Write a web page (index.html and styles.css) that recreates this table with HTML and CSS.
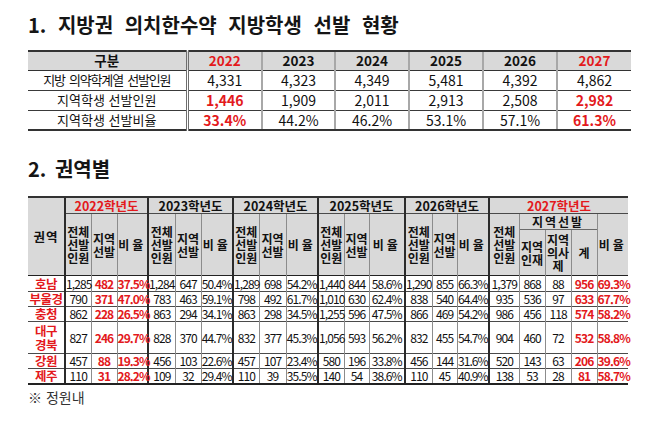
FILE: index.html
```html
<!DOCTYPE html>
<html lang="ko">
<head>
<meta charset="utf-8">
<title>지방권 의치한수약 지방학생 선발 현황</title>
<link rel="stylesheet" href="styles.css">
</head>
<body>
<div class="page">
  <h1 class="title">1. 지방권 의치한수약 지방학생 선발 현황</h1>
  <table class="summary">
    <colgroup>
      <col class="s-label"><col class="s-75"><col class="s-73"><col class="s-74"><col class="s-74"><col class="s-74"><col class="s-74">
    </colgroup>
    <thead>
      <tr><th class="label">구분</th><th class="red">2022</th><th>2023</th><th>2024</th><th>2025</th><th>2026</th><th class="red">2027</th></tr>
    </thead>
    <tbody>
      <tr><td class="label tight">지방 의약학계열 선발인원</td><td>4,331</td><td>4,323</td><td>4,349</td><td>5,481</td><td>4,392</td><td>4,862</td></tr>
      <tr><td class="label">지역학생 선발인원</td><td class="red b">1,446</td><td>1,909</td><td>2,011</td><td>2,913</td><td>2,508</td><td class="red b">2,982</td></tr>
      <tr><td class="label">지역학생 선발비율</td><td class="red b">33.4%</td><td>44.2%</td><td>46.2%</td><td>53.1%</td><td>57.1%</td><td class="red b">61.3%</td></tr>
    </tbody>
  </table>

  <h2 class="title title2">2. 권역별</h2>
  <table class="region">
    <colgroup>
      <col class="w37">
      <col class="w26"><col class="w26"><col class="w31">
      <col class="w27"><col class="w26"><col class="w32">
      <col class="w26"><col class="w27"><col class="w32">
      <col class="w26"><col class="w25"><col class="w36">
      <col class="w27"><col class="w25"><col class="w32">
      <col class="w30"><col class="w26"><col class="w26"><col class="w26"><col class="w31">
    </colgroup>
    <thead>
      <tr class="ha">
        <th rowspan="3" class="first">권역</th>
        <th colspan="3" class="gs red">2022학년도</th>
        <th colspan="3" class="gs">2023학년도</th>
        <th colspan="3" class="gs">2024학년도</th>
        <th colspan="3" class="gs">2025학년도</th>
        <th colspan="3" class="gs">2026학년도</th>
        <th colspan="5" class="gs red">2027학년도</th>
      </tr>
      <tr class="hb">
        <th rowspan="2" class="gs">전체<br>선발<br>인원</th><th rowspan="2">지역<br>선발</th><th rowspan="2" class="sp">비율</th>
        <th rowspan="2" class="gs">전체<br>선발<br>인원</th><th rowspan="2">지역<br>선발</th><th rowspan="2" class="sp">비율</th>
        <th rowspan="2" class="gs">전체<br>선발<br>인원</th><th rowspan="2">지역<br>선발</th><th rowspan="2" class="sp">비율</th>
        <th rowspan="2" class="gs">전체<br>선발<br>인원</th><th rowspan="2">지역<br>선발</th><th rowspan="2" class="sp">비율</th>
        <th rowspan="2" class="gs">전체<br>선발<br>인원</th><th rowspan="2">지역<br>선발</th><th rowspan="2" class="sp">비율</th>
        <th rowspan="2" class="gs">전체<br>선발<br>인원</th><th colspan="3" class="sp sub">지역선발</th><th rowspan="2" class="sp">비율</th>
      </tr>
      <tr class="hc">
        <th>지역<br>인재</th><th>지역<br>의사<br>제</th><th>계</th>
      </tr>
    </thead>
    <tbody>
      <tr>
        <th class="first">호남</th>
        <td class="gs">1,285</td><td class="red b">482</td><td class="red b">37.5%</td>
        <td class="gs">1,284</td><td>647</td><td>50.4%</td>
        <td class="gs">1,289</td><td>698</td><td>54.2%</td>
        <td class="gs">1,440</td><td>844</td><td>58.6%</td>
        <td class="gs">1,290</td><td>855</td><td>66.3%</td>
        <td class="gs">1,379</td><td>868</td><td>88</td><td class="red b">956</td><td class="red b">69.3%</td>
      </tr>
      <tr>
        <th class="first">부울경</th>
        <td class="gs">790</td><td class="red b">371</td><td class="red b">47.0%</td>
        <td class="gs">783</td><td>463</td><td>59.1%</td>
        <td class="gs">798</td><td>492</td><td>61.7%</td>
        <td class="gs">1,010</td><td>630</td><td>62.4%</td>
        <td class="gs">838</td><td>540</td><td>64.4%</td>
        <td class="gs">935</td><td>536</td><td>97</td><td class="red b">633</td><td class="red b">67.7%</td>
      </tr>
      <tr>
        <th class="first">충청</th>
        <td class="gs">862</td><td class="red b">228</td><td class="red b">26.5%</td>
        <td class="gs">863</td><td>294</td><td>34.1%</td>
        <td class="gs">863</td><td>298</td><td>34.5%</td>
        <td class="gs">1,255</td><td>596</td><td>47.5%</td>
        <td class="gs">866</td><td>469</td><td>54.2%</td>
        <td class="gs">986</td><td>456</td><td>118</td><td class="red b">574</td><td class="red b">58.2%</td>
      </tr>
      <tr class="tall">
        <th class="first">대구<br>경북</th>
        <td class="gs">827</td><td class="red b">246</td><td class="red b">29.7%</td>
        <td class="gs">828</td><td>370</td><td>44.7%</td>
        <td class="gs">832</td><td>377</td><td>45.3%</td>
        <td class="gs">1,056</td><td>593</td><td>56.2%</td>
        <td class="gs">832</td><td>455</td><td>54.7%</td>
        <td class="gs">904</td><td>460</td><td>72</td><td class="red b">532</td><td class="red b">58.8%</td>
      </tr>
      <tr>
        <th class="first">강원</th>
        <td class="gs">457</td><td class="red b">88</td><td class="red b">19.3%</td>
        <td class="gs">456</td><td>103</td><td>22.6%</td>
        <td class="gs">457</td><td>107</td><td>23.4%</td>
        <td class="gs">580</td><td>196</td><td>33.8%</td>
        <td class="gs">456</td><td>144</td><td>31.6%</td>
        <td class="gs">520</td><td>143</td><td>63</td><td class="red b">206</td><td class="red b">39.6%</td>
      </tr>
      <tr>
        <th class="first">제주</th>
        <td class="gs">110</td><td class="red b">31</td><td class="red b">28.2%</td>
        <td class="gs">109</td><td>32</td><td>29.4%</td>
        <td class="gs">110</td><td>39</td><td>35.5%</td>
        <td class="gs">140</td><td>54</td><td>38.6%</td>
        <td class="gs">110</td><td>45</td><td>40.9%</td>
        <td class="gs">138</td><td>53</td><td>28</td><td class="red b">81</td><td class="red b">58.7%</td>
      </tr>
    </tbody>
  </table>
  <p class="note">※ 정원내</p>
</div>
</body>
</html>
```

FILE: styles.css
```css
* { box-sizing: border-box; }

body {
  margin: 0;
  background: #ffffff;
  color: #111111;
  font-family: "Noto Sans CJK KR", "Noto Sans", sans-serif;
}

.page {
  padding: 13px 0 0 28px;
}

.title {
  margin: 0;
  font-size: 20px;
  line-height: 24px;
  font-weight: 700;
  color: #151515;
  word-spacing: 6px;
}

.title2 {
  margin-top: 26px;
  word-spacing: 3px;
}

.red { color: #e3191c; }
.b { font-weight: 700; }

/* ---------- table 1 ---------- */
.summary {
  margin-top: 13px;
  border-collapse: collapse;
  table-layout: fixed;
  width: 603px;
}

.s-label { width: 159px; }
.s-75 { width: 75px; }
.s-73 { width: 73px; }
.s-74 { width: 74px; }

.summary th,
.summary td {
  padding: 0;
  text-align: center;
  white-space: nowrap;
  border-left: 2px solid #a8a8a8;
  border-top: 1px solid #3a3a3a;
}

.summary .label {
  border-left: none;
  border-right: 3px double #6e6e6e;
  font-size: 13px;
  font-weight: 400;
}

.summary thead th {
  background: #d9d9d9;
  font-size: 13.5px;
  font-weight: 700;
  line-height: 17px;
  height: 19px;
  border-top: 2px solid #333333;
  border-bottom: 1px solid #333333;
}

.summary thead th.label {
  font-size: 13.5px;
  font-weight: 700;
}

.summary td {
  font-size: 14px;
  line-height: 18px;
  height: 20px;
}

.summary td.label { font-size: 13px; }
.summary .tight { letter-spacing: -1.2px; word-spacing: 2px; }

.summary tbody tr:last-child td {
  border-bottom: 2px solid #333333;
}

/* ---------- table 2 ---------- */
.region {
  margin-top: 15px;
  border-collapse: collapse;
  table-layout: fixed;
  width: 600px;
}

.w25 { width: 25px; }
.w26 { width: 26px; }
.w27 { width: 27px; }
.w30 { width: 30px; }
.w31 { width: 31px; }
.w32 { width: 32px; }
.w36 { width: 36px; }
.w37 { width: 37px; }

.region th,
.region td {
  padding: 0;
  text-align: center;
  white-space: nowrap;
  border-left: 1px solid #8c8c8c;
  border-top: 1px solid #4a4a4a;
}

.region .first { border-left: none; }
.region .gs { border-left: 2px solid #2b2b2b; }

.region thead th {
  background: #d9d9d9;
  font-size: 12px;
  font-weight: 700;
  line-height: 13px;
}

.region .ha th {
  height: 16px;
  border-top: 2px solid #333333;
  font-size: 12.5px;
  line-height: 15px;
}

.region .ha th.first { letter-spacing: 1px; }
.region .hb th { height: 16px; }
.region .hc th { height: 46px; border-top: 1px solid #6a6a6a; }
.region .sp { letter-spacing: 3px; }
.region .sub { letter-spacing: 2px; }

.region tbody tr:first-child th,
.region tbody tr:first-child td { border-top: 1px solid #222222; }

.region tbody th {
  background: #ffffff;
  color: #e3191c;
  font-size: 12.5px;
  font-weight: 700;
  line-height: 14px;
  letter-spacing: -0.5px;
}

.region tbody td {
  font-size: 12px;
  line-height: 14px;
  height: 15px;
  letter-spacing: -0.9px;
}

.region tbody tr:first-child td { height: 16px; }
.region tbody tr.tall td { height: 32px; }

.region tbody tr:last-child th,
.region tbody tr:last-child td {
  border-bottom: 2px solid #222222;
}

.note {
  margin: 2px 0 0;
  font-size: 14px;
  line-height: 20px;
  color: #333333;
}
```
